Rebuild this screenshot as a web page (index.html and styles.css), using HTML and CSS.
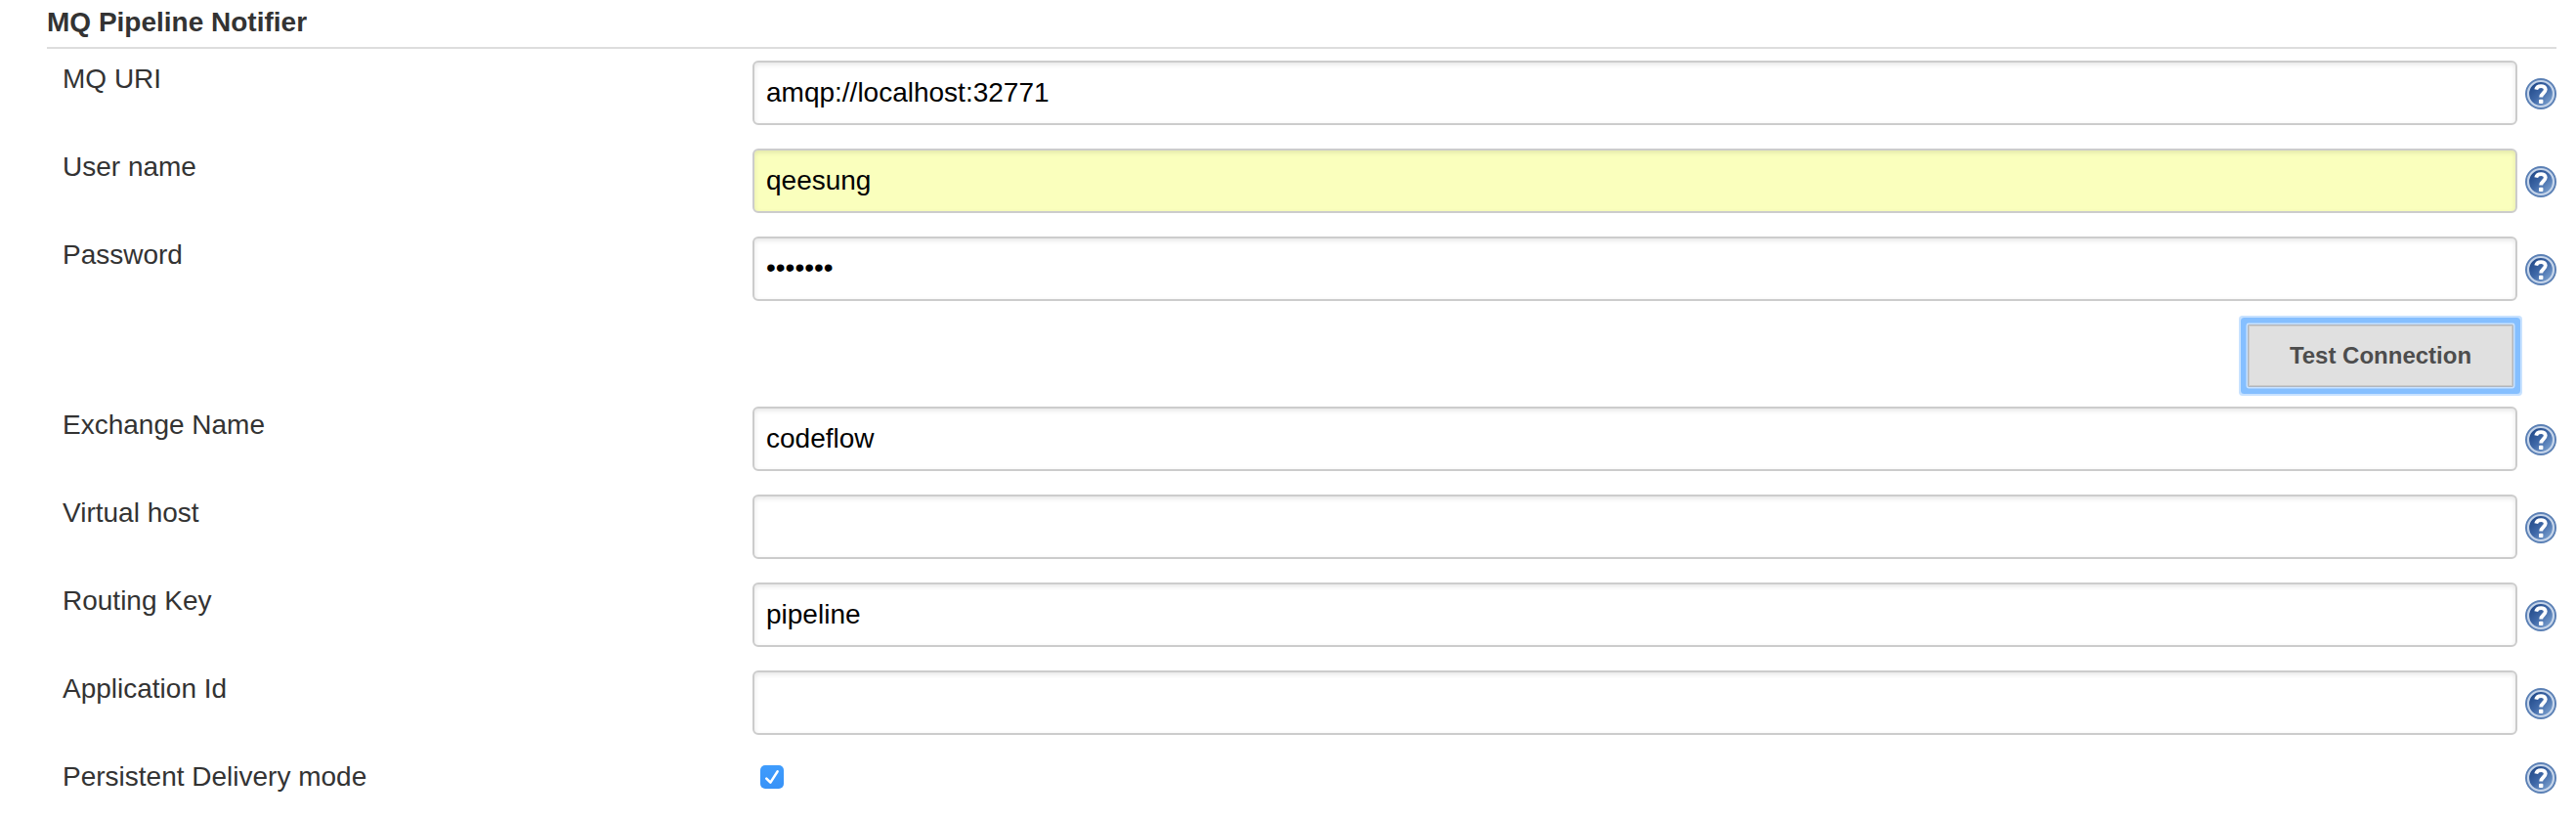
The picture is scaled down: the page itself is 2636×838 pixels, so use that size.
FILE: index.html
```html
<!DOCTYPE html>
<html lang="en">
<head>
<meta charset="utf-8">
<title>MQ Pipeline Notifier</title>
<link rel="stylesheet" href="styles.css">
</head>
<body>
<svg class="defs" width="0" height="0" aria-hidden="true">
  <defs>
    <linearGradient id="disc" x1="0" y1="0" x2="1" y2="1">
      <stop offset="0.1" stop-color="#1f4787"/>
      <stop offset="0.5" stop-color="#4069a8"/>
      <stop offset="0.9" stop-color="#7ea3d0"/>
    </linearGradient>
    <symbol id="help" viewBox="0 0 32 32">
      <circle cx="16" cy="16" r="16" fill="#5b80b5"/>
      <circle cx="16" cy="16" r="13" fill="url(#disc)" stroke="#c6d5ea" stroke-width="2.2"/>
      <path d="M11.2 11.6C12 7 20.6 6.8 20.8 11.6C20.8 15 16.2 15.6 16.2 19.6" fill="none" stroke="#fff" stroke-width="3.8"/>
      <rect x="14" y="21.8" width="4.4" height="4.2" rx="1" fill="#fff"/>
    </symbol>
  </defs>
</svg>
<form class="section">
  <h2 class="title">MQ Pipeline Notifier</h2>
  <div class="row">
    <label class="label" for="uri">MQ URI</label>
    <input class="field" id="uri" type="text" value="amqp://localhost:32771">
    <svg class="help"><use href="#help"/></svg>
  </div>
  <div class="row">
    <label class="label" for="user">User name</label>
    <input class="field filled" id="user" type="text" value="qeesung">
    <svg class="help"><use href="#help"/></svg>
  </div>
  <div class="row">
    <label class="label" for="pass">Password</label>
    <input class="field masked" id="pass" type="text" value="•••••••">
    <svg class="help"><use href="#help"/></svg>
  </div>
  <div class="actions"><button class="button" type="button">Test Connection</button></div>
  <div class="row">
    <label class="label" for="exchange">Exchange Name</label>
    <input class="field" id="exchange" type="text" value="codeflow">
    <svg class="help"><use href="#help"/></svg>
  </div>
  <div class="row">
    <label class="label" for="vhost">Virtual host</label>
    <input class="field" id="vhost" type="text">
    <svg class="help"><use href="#help"/></svg>
  </div>
  <div class="row">
    <label class="label" for="routing">Routing Key</label>
    <input class="field" id="routing" type="text" value="pipeline">
    <svg class="help"><use href="#help"/></svg>
  </div>
  <div class="row">
    <label class="label" for="app">Application Id</label>
    <input class="field" id="app" type="text">
    <svg class="help"><use href="#help"/></svg>
  </div>
  <div class="row compact">
    <span class="label">Persistent Delivery mode</span>
    <span class="check" role="checkbox" aria-checked="true">
      <svg class="tick" viewBox="0 0 24 24"><path d="M6.3 13.6L10.4 17.6L17.6 6.4" fill="none" stroke="#fff" stroke-width="2.6" stroke-linecap="round" stroke-linejoin="round"/></svg>
    </span>
    <svg class="help"><use href="#help"/></svg>
  </div>
</form>
</body>
</html>
```
FILE: styles.css
```css
* { box-sizing: border-box; }
body {
  margin: 0;
  background: #fff;
  color: #333;
  font-family: "Liberation Sans", Helvetica, Arial, sans-serif;
  font-size: 28px;
  line-height: 32px;
}
.defs { display: block; }
.section {
  width: 2568px;
  height: 838px;
  margin-left: 48px;
  overflow: hidden;
}
.title {
  height: 50px;
  margin: 0;
  padding-top: 7px;
  border-bottom: 2px solid #ddd;
  font-size: 28px;
  line-height: 32px;
}
.row {
  display: grid;
  grid-template-columns: 706px 1814px 32px;
  height: 90px;
  padding-left: 16px;
  align-items: start;
}
.label { padding-top: 15px; }
.field {
  width: 1806px;
  height: 66px;
  margin: 12px 0 0;
  padding: 0 12px;
  border: 2px solid #ccc;
  border-radius: 6px;
  background: #fff;
  box-shadow: inset 0 2px 5px rgba(0, 0, 0, 0.1);
  color: #000;
  font: 28px "Liberation Sans", Helvetica, Arial, sans-serif;
}
.filled { background: #faffbd; }
.masked { padding-bottom: 2px; }
.help { display: block; width: 32px; height: 32px; margin-top: 30px; }
.actions {
  display: flex;
  justify-content: flex-end;
  height: 84px;
  padding: 12px 44px 0 0;
}
.button {
  width: 272px;
  height: 64px;
  padding: 0;
  border: 1px solid #aeb6c0;
  border-radius: 1px;
  background: #e0e0e0;
  box-shadow: inset 0 0 0 1px #cdcbc8, 0 0 0 1.5px #c9e2ff, 0 0 0 7px #85bfff, 0 0 0 9px #c8e2ff;
  color: #4d4d4d;
  font: bold 24px "Liberation Sans", Helvetica, Arial, sans-serif;
}
.compact { height: 74px; }
.compact .help { margin-top: 16px; }
.check {
  width: 24px;
  height: 24px;
  margin: 19px 0 0 8px;
  border-radius: 5px;
  background: linear-gradient(#3f9cfd, #3792f7);
}
.tick { display: block; width: 24px; height: 24px; }
```
